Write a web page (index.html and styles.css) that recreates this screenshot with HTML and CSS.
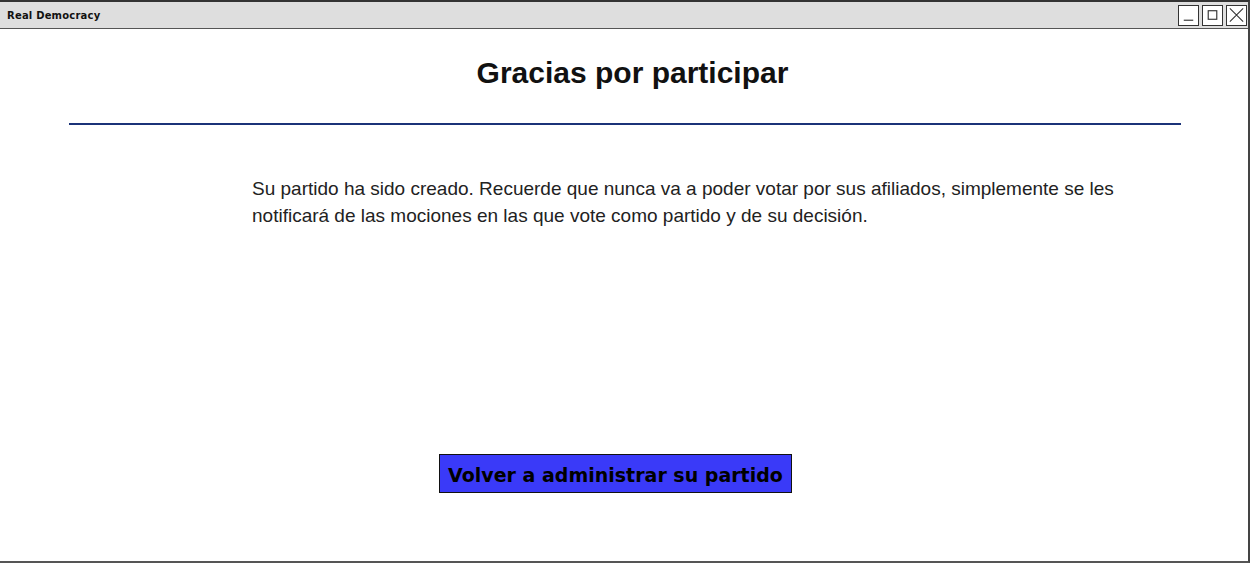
FILE: index.html
```html
<!DOCTYPE html>
<html lang="es">
<head>
<meta charset="utf-8">
<title>Real Democracy</title>
<link rel="stylesheet" href="styles.css">
</head>
<body>
<div class="window">
  <div class="titlebar">
    <span class="title">Real Democracy</span>
    <div class="controls">
      <span class="ctl"><svg width="20" height="20" viewBox="0 0 20 20"><line x1="5" y1="15.5" x2="15" y2="15.5" stroke="#333" stroke-width="1.2"/></svg></span>
      <span class="ctl"><svg width="20" height="20" viewBox="0 0 20 20"><rect x="5.5" y="5.5" width="9" height="9" fill="none" stroke="#333" stroke-width="1.2"/></svg></span>
      <span class="ctl"><svg width="20" height="20" viewBox="0 0 20 20"><path d="M3 3 L17 17 M17 3 L3 17" stroke="#333" stroke-width="1.1"/></svg></span>
    </div>
  </div>
  <div class="content">
    <h1 class="heading">Gracias por participar</h1>
    <hr class="rule">
    <p class="message">Su partido ha sido creado. Recuerde que nunca va a poder votar por sus afiliados, simplemente se les notificará de las mociones en las que vote como partido y de su decisión.</p>
    <div class="actions">
      <button class="btn">Volver a administrar su partido</button>
    </div>
  </div>
</div>
</body>
</html>
```
FILE: styles.css
```css
* { box-sizing: border-box; }
html, body { margin: 0; padding: 0; background: #fff; }
.window {
  width: 1250px;
  height: 563px;
  border-top: 2px solid #333;
  border-right: 2px solid #444;
  border-bottom: 2px solid #555;
  display: flex;
  flex-direction: column;
}
.titlebar {
  height: 27px;
  background: #dedede;
  border-bottom: 1px solid #555;
  display: flex;
  align-items: center;
  justify-content: space-between;
  padding-left: 7px;
  padding-right: 1px;
}
.title {
  font-family: "Comic Sans MS", "DejaVu Sans", sans-serif;
  font-size: 10px;
  font-weight: bold;
  color: #111;
  letter-spacing: 0.2px;
}
.controls { display: flex; gap: 3px; }
.ctl {
  width: 21px;
  height: 21px;
  border: 1px solid #333;
  background: #fff;
  display: flex;
  align-items: center;
  justify-content: center;
}
.ctl svg { display: block; }
.content {
  flex: 1;
  display: flex;
  flex-direction: column;
  padding: 0 67px 0 69px;
}
.heading {
  margin: 26px 0 0;
  padding-left: 15px;
  text-align: center;
  font-family: "Liberation Sans", Arial, sans-serif;
  font-size: 30px;
  font-weight: bold;
  color: #111;
  line-height: 36px;
}
.rule {
  margin: 32px 0 0;
  border: 0;
  height: 2px;
  background: #1b3378;
}
.message {
  margin: 50px 0 0 183px;
  font-family: "Liberation Sans", Arial, sans-serif;
  font-size: 19px;
  line-height: 27px;
  color: #222;
  max-width: 880px;
}
.actions {
  margin-top: 225px;
  padding-left: 370px;
}
.btn {
  width: 353px;
  height: 39px;
  background: #3a3af8;
  border: 1px solid #111;
  font-family: "Comic Sans MS", "DejaVu Sans", sans-serif;
  font-weight: bold;
  font-size: 19px;
  color: #000;
  padding: 3px 0 0;
}
```
